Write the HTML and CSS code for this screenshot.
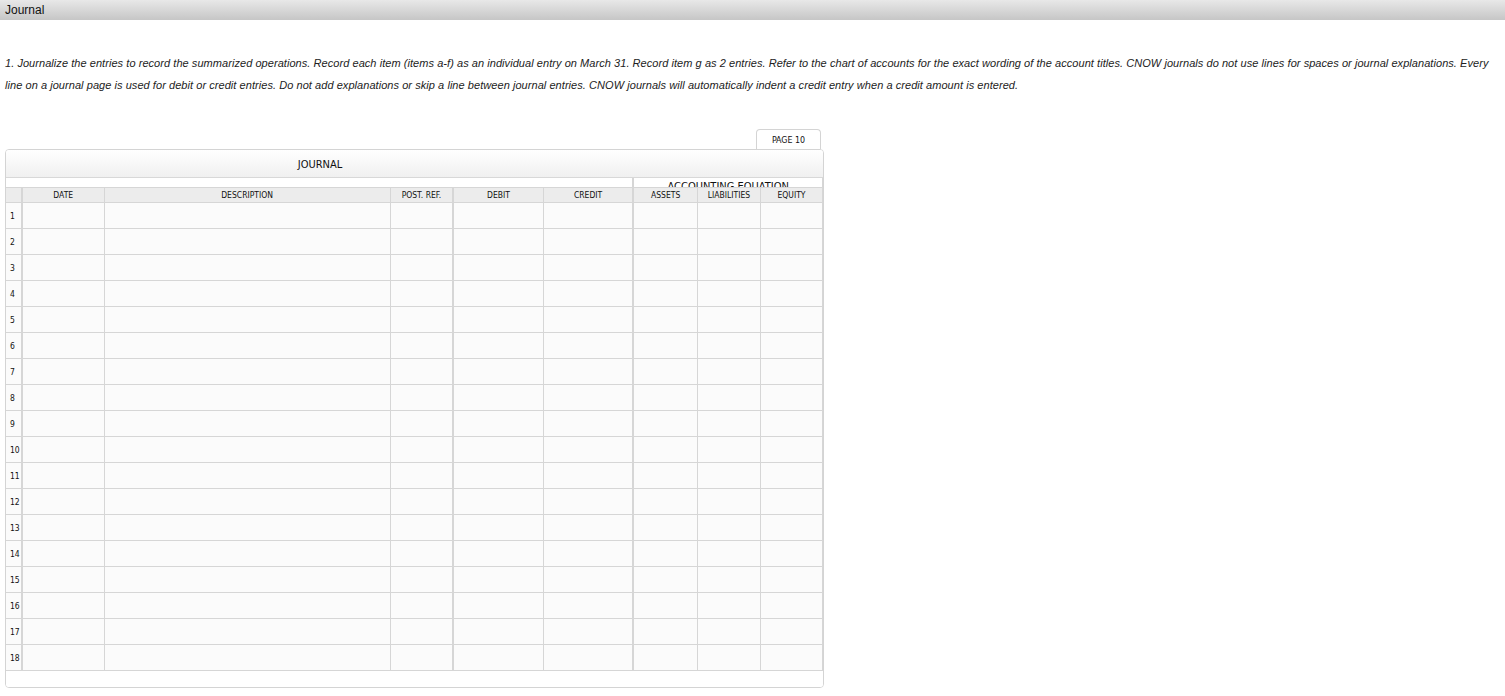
FILE: index.html
```html
<!DOCTYPE html>
<html>
<head>
<meta charset="utf-8">
<title>Journal</title>
<link rel="stylesheet" href="styles.css">
</head>
<body>
<div class="titlebar">Journal</div>
<div class="instructions">1. Journalize the entries to record the summarized operations. Record each item (items a-f) as an individual entry on March 31. Record item g as 2 entries. Refer to the chart of accounts for the exact wording of the account titles. CNOW journals do not use lines for spaces or journal explanations. Every line on a journal page is used for debit or credit entries. Do not add explanations or skip a line between journal entries. CNOW journals will automatically indent a credit entry when a credit amount is entered.</div>
<div class="wrap">
  <div class="tabrow"><div class="pagetab">PAGE 10</div></div>
  <div class="journal">
    <div class="jhead"><div class="jtitle">JOURNAL</div></div>
    <table class="grid">
      <colgroup>
        <col class="c0"><col class="c1"><col class="c2"><col class="c3"><col class="c4"><col class="c5"><col class="c6"><col class="c7"><col class="c8">
      </colgroup>
      <tr class="eqrow">
        <td colspan="6" class="sep"></td>
        <td colspan="3"><div class="eqclip">ACCOUNTING EQUATION</div></td>
      </tr>
      <tr class="hdr">
        <th class="num"></th><th>DATE</th><th>DESCRIPTION</th><th class="thick">POST. REF.</th><th>DEBIT</th><th class="sep">CREDIT</th><th>ASSETS</th><th>LIABILITIES</th><th>EQUITY</th>
      </tr>
      <tr><td class="num">1</td><td></td><td></td><td class="thick"></td><td></td><td class="sep"></td><td></td><td></td><td></td></tr>
      <tr><td class="num">2</td><td></td><td></td><td class="thick"></td><td></td><td class="sep"></td><td></td><td></td><td></td></tr>
      <tr><td class="num">3</td><td></td><td></td><td class="thick"></td><td></td><td class="sep"></td><td></td><td></td><td></td></tr>
      <tr><td class="num">4</td><td></td><td></td><td class="thick"></td><td></td><td class="sep"></td><td></td><td></td><td></td></tr>
      <tr><td class="num">5</td><td></td><td></td><td class="thick"></td><td></td><td class="sep"></td><td></td><td></td><td></td></tr>
      <tr><td class="num">6</td><td></td><td></td><td class="thick"></td><td></td><td class="sep"></td><td></td><td></td><td></td></tr>
      <tr><td class="num">7</td><td></td><td></td><td class="thick"></td><td></td><td class="sep"></td><td></td><td></td><td></td></tr>
      <tr><td class="num">8</td><td></td><td></td><td class="thick"></td><td></td><td class="sep"></td><td></td><td></td><td></td></tr>
      <tr><td class="num">9</td><td></td><td></td><td class="thick"></td><td></td><td class="sep"></td><td></td><td></td><td></td></tr>
      <tr><td class="num">10</td><td></td><td></td><td class="thick"></td><td></td><td class="sep"></td><td></td><td></td><td></td></tr>
      <tr><td class="num">11</td><td></td><td></td><td class="thick"></td><td></td><td class="sep"></td><td></td><td></td><td></td></tr>
      <tr><td class="num">12</td><td></td><td></td><td class="thick"></td><td></td><td class="sep"></td><td></td><td></td><td></td></tr>
      <tr><td class="num">13</td><td></td><td></td><td class="thick"></td><td></td><td class="sep"></td><td></td><td></td><td></td></tr>
      <tr><td class="num">14</td><td></td><td></td><td class="thick"></td><td></td><td class="sep"></td><td></td><td></td><td></td></tr>
      <tr><td class="num">15</td><td></td><td></td><td class="thick"></td><td></td><td class="sep"></td><td></td><td></td><td></td></tr>
      <tr><td class="num">16</td><td></td><td></td><td class="thick"></td><td></td><td class="sep"></td><td></td><td></td><td></td></tr>
      <tr><td class="num">17</td><td></td><td></td><td class="thick"></td><td></td><td class="sep"></td><td></td><td></td><td></td></tr>
      <tr><td class="num">18</td><td></td><td></td><td class="thick"></td><td></td><td class="sep"></td><td></td><td></td><td></td></tr>
    </table>
    <div class="jfoot"></div>
  </div>
</div>
</body>
</html>
```

FILE: styles.css
```css
html, body {
  margin: 0;
  padding: 0;
  background: #ffffff;
}
body {
  font-family: "Liberation Sans", Arial, sans-serif;
  color: #111;
}
.titlebar {
  height: 20px;
  line-height: 20px;
  padding-left: 5px;
  font-size: 12px;
  color: #111;
  background: linear-gradient(#e8e8e8, #c6c6c6);
}
.instructions {
  margin: 32px 10px 0 5px;
  font-size: 11px;
  letter-spacing: 0.055px;
  font-style: italic;
  line-height: 22px;
  color: #222;
}
.wrap {
  margin: 33px 0 0 5px;
  width: 819px;
}
.tabrow {
  display: flex;
  justify-content: flex-end;
  padding-right: 3px;
}
.pagetab {
  width: 63px;
  height: 19px;
  line-height: 20px;
  border: 1px solid #d4d4d4;
  border-bottom: none;
  border-radius: 4px 4px 0 0;
  text-align: center;
  font-family: "DejaVu Sans Condensed", "DejaVu Sans", sans-serif;
  font-size: 8.8px;
  color: #111;
  background: #fff;
}
.journal {
  border: 1px solid #d4d4d4;
  border-radius: 4px;
  background: #fff;
  overflow: hidden;
}
.jhead {
  height: 27px;
  border-bottom: 1px solid #d8d8d8;
  background: linear-gradient(#ffffff, #f0f0f0);
}
.jtitle {
  width: 628px;
  text-align: center;
  line-height: 30px;
  font-family: "DejaVu Sans Condensed", "DejaVu Sans", sans-serif;
  font-size: 11px;
  color: #111;
}
.grid {
  border-collapse: collapse;
  table-layout: fixed;
  width: 817px;
  margin: 0;
}
.c0 { width: 16px; }
.c1 { width: 82px; }
.c2 { width: 286px; }
.c3 { width: 63px; }
.c4 { width: 90px; }
.c5 { width: 90px; }
.c6 { width: 64px; }
.c7 { width: 63px; }
.c8 { width: 62px; }
.grid td, .grid th {
  padding: 0;
  border: 1px solid #d6d6d6;
  background: #fbfbfb;
  height: 25px;
}
.grid tr > :first-child { border-left: none; }
.grid tr > :last-child { border-right: 1px solid #d6d6d6; }
.eqrow td {
  height: 9px;
  background: #fff;
  border-top: none;
  border-bottom: none;
}
.eqrow td:first-child { border-left: none; }
.eqclip {
  height: 9px;
  overflow: hidden;
  text-align: center;
  font-family: "DejaVu Sans Condensed", "DejaVu Sans", sans-serif;
  font-size: 11px;
  line-height: 18px;
  color: #111;
}
.grid .hdr th {
  height: 13px;
  background: #ececec;
  font-weight: normal;
  font-family: "DejaVu Sans Condensed", "DejaVu Sans", sans-serif;
  font-size: 8.5px;
  color: #111;
  line-height: 14px;
  text-align: center;
}
.grid .num {
  border-right: 2px solid #d6d6d6;
  font-family: "DejaVu Sans Condensed", "DejaVu Sans", sans-serif;
  font-size: 8.5px;
  color: #111;
  text-align: left;
  padding-left: 4px;
  background: #fbfbfb;
}
.grid .hdr .num { background: #ececec; }
.grid .thick { border-right: 2px solid #d6d6d6; }
.grid .sep { border-right: 2px solid #d6d6d6; }
.jfoot {
  height: 16px;
  background: #fff;
}
```
